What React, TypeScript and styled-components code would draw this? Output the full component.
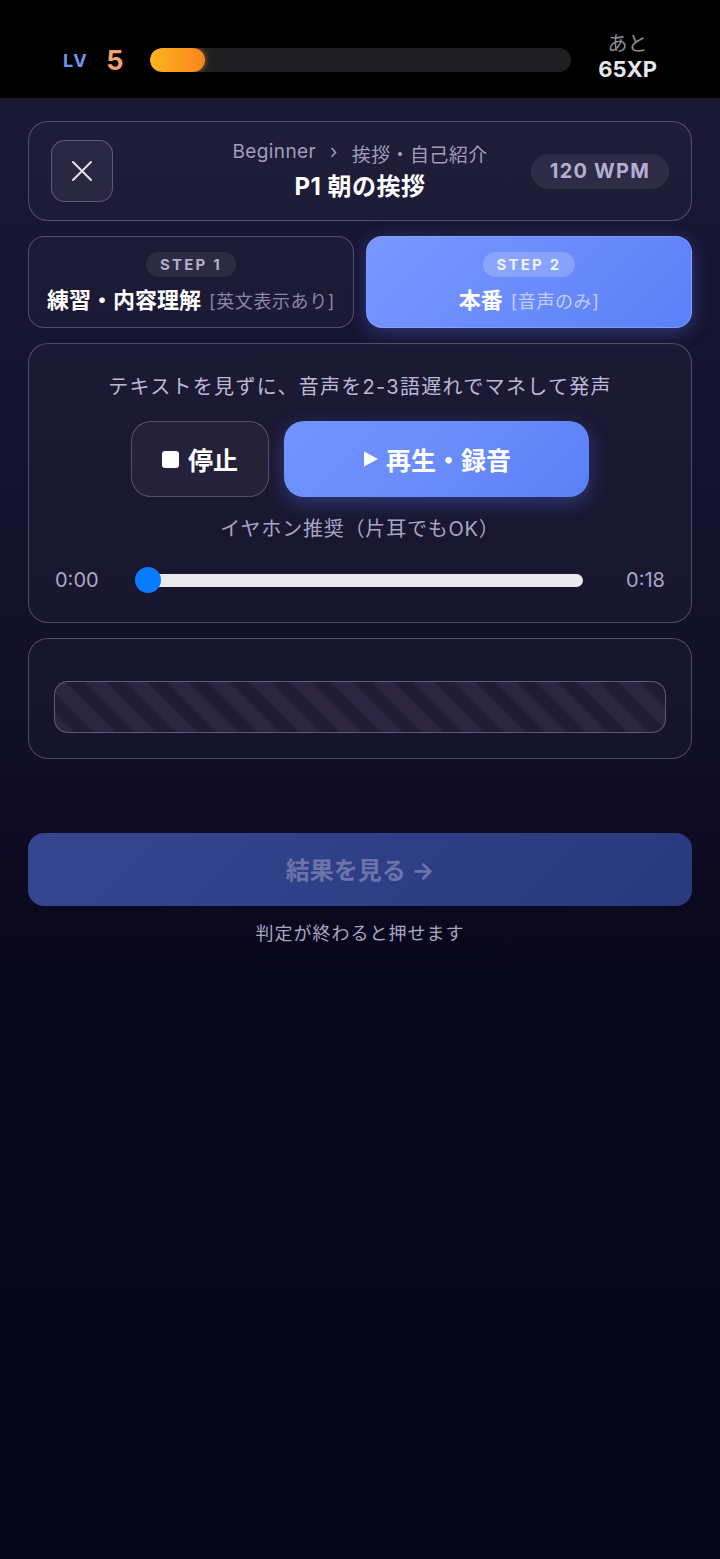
import React from "react";
import styled, { createGlobalStyle } from "styled-components";

const Global = createGlobalStyle`
  html, body { margin: 0; padding: 0; background: #08061a; }
  body { font-family: "Inter", "Noto Sans CJK JP", sans-serif; -webkit-font-smoothing: antialiased; }
  * { box-sizing: border-box; }
`;

const Screen = styled.div`
  width: 720px;
  min-height: 1559px;
  display: flex;
  flex-direction: column;
  background: linear-gradient(180deg, #1c1937 0%, #120f29 45%, #09071b 62%, #07051a 100%);
`;

const TopBar = styled.div`
  height: 98px;
  background: #000;
  display: flex;
  align-items: center;
  padding: 22px 63px 0 63px;
`;

const LvLabel = styled.span`
  font-family: "Inter", sans-serif;
  font-weight: 700;
  font-size: 18px;
  color: #6f95f2;
  letter-spacing: 1.5px;
`;

const LvNum = styled.span`
  font-family: "Inter", sans-serif;
  font-weight: 700;
  font-size: 27px;
  color: #f2a273;
  margin-left: 18px;
  margin-right: 26px;
`;

const XpTrack = styled.div`
  flex: 1;
  height: 24px;
  border-radius: 12px;
  background: #1f1f22;
  overflow: hidden;
`;

const XpFill = styled.div`
  height: 100%;
  border-radius: 12px;
  background: linear-gradient(90deg, #ffb51f 0%, #f7851c 100%);
  box-shadow: 0 0 6px rgba(255, 150, 30, 0.6);
`;

const XpRemain = styled.div`
  display: flex;
  flex-direction: column;
  align-items: center;
  margin-left: 27px;
  line-height: 1.2;
  margin-top: -6px;
`;

const XpSmall = styled.span`
  font-size: 20px;
  color: #8d8d92;
`;

const XpBig = styled.span`
  font-family: "Inter", sans-serif;
  font-weight: 700;
  font-size: 22px;
  color: #e6e6ea;
`;

const Content = styled.div`
  display: flex;
  flex-direction: column;
  padding: 23px 28px 0 28px;
`;

const Card = styled.div`
  border: 1.5px solid rgba(190, 185, 230, 0.32);
  border-radius: 20px;
  background: rgba(255, 255, 255, 0.025);
`;

const HeaderCard = styled(Card)`
  height: 100px;
  display: grid;
  grid-template-columns: 1fr auto 1fr;
  align-items: center;
  padding: 0 22px;
`;

const CloseBtn = styled.button`
  width: 62px;
  height: 62px;
  border-radius: 14px;
  border: 1.5px solid rgba(190, 185, 230, 0.35);
  background: rgba(255, 255, 255, 0.05);
  display: flex;
  align-items: center;
  justify-content: center;
  padding: 0;
`;

const HeaderCenter = styled.div`
  display: flex;
  flex-direction: column;
  align-items: center;
  gap: 0;
`;

const Crumb = styled.div`
  font-size: 19px;
  color: #a19dbd;
  display: flex;
  gap: 14px;
  letter-spacing: 0.4px;
`;

const Title = styled.div`
  font-size: 24px;
  font-weight: 700;
  color: #fff;
  letter-spacing: 0.5px;
`;

const WpmPill = styled.div`
  justify-self: end;
  height: 35px;
  padding: 0 19px;
  border-radius: 18px;
  background: rgba(255, 255, 255, 0.07);
  display: flex;
  align-items: center;
  font-family: "Inter", sans-serif;
  font-weight: 700;
  font-size: 20px;
  letter-spacing: 1.2px;
  color: #b3afd2;
`;

const StepRow = styled.div`
  display: grid;
  grid-template-columns: 1fr 1fr;
  gap: 12px;
  margin-top: 15px;
`;

const StepCard = styled.div<{ $active?: boolean }>`
  height: 92px;
  border-radius: 16px;
  display: flex;
  flex-direction: column;
  align-items: center;
  justify-content: center;
  gap: 5px;
  padding-top: 1px;
  border: 1.5px solid ${(p) => (p.$active ? "rgba(140,170,255,0.6)" : "rgba(190,185,230,0.32)")};
  background: ${(p) =>
    p.$active
      ? "linear-gradient(135deg, #7b97ff 0%, #6a8cfb 50%, #5a80f7 100%)"
      : "rgba(255,255,255,0.025)"};
  box-shadow: ${(p) => (p.$active ? "0 4px 18px rgba(90,120,255,0.35)" : "none")};
`;

const StepPill = styled.div<{ $active?: boolean }>`
  height: 25px;
  padding: 0 14px;
  border-radius: 13px;
  display: flex;
  align-items: center;
  font-family: "Inter", sans-serif;
  font-weight: 700;
  font-size: 15px;
  letter-spacing: 2.2px;
  background: ${(p) => (p.$active ? "rgba(255,255,255,0.2)" : "rgba(255,255,255,0.07)")};
  color: ${(p) => (p.$active ? "#eef1ff" : "#b2aecb")};
`;

const StepLabel = styled.div`
  display: flex;
  align-items: baseline;
  gap: 8px;
  white-space: nowrap;
`;

const StepMain = styled.span`
  font-size: 22px;
  font-weight: 700;
  color: #fff;
`;

const StepSub = styled.span<{ $active?: boolean }>`
  font-size: 18px;
  letter-spacing: 0.6px;
  color: ${(p) => (p.$active ? "rgba(255,255,255,0.62)" : "#8a86a6")};
`;

const PlayerCard = styled(Card)`
  margin-top: 15px;
  height: 280px;
  display: flex;
  flex-direction: column;
  align-items: center;
  padding: 27px 26px 0 26px;
`;

const Hint = styled.div`
  font-size: 20px;
  letter-spacing: 1.3px;
  color: #bdb9d4;
`;

const BtnRow = styled.div`
  display: flex;
  gap: 15px;
  margin-top: 21px;
`;

const StopBtn = styled.button`
  width: 138px;
  height: 76px;
  border-radius: 20px;
  border: 1.5px solid rgba(190, 185, 230, 0.3);
  background: #25213a;
  color: #fff;
  font-family: "Inter", "Noto Sans CJK JP", sans-serif;
  font-size: 25px;
  font-weight: 700;
  display: flex;
  align-items: center;
  justify-content: center;
  gap: 9px;
`;

const StopIcon = styled.span`
  width: 17px;
  height: 17px;
  border-radius: 3px;
  background: #fff;
`;

const PlayBtn = styled.button`
  width: 305px;
  height: 76px;
  border-radius: 20px;
  border: none;
  background: linear-gradient(135deg, #7093ff 0%, #6a8dfb 50%, #5b80f6 100%);
  box-shadow: 0 6px 20px rgba(90, 120, 255, 0.35);
  color: #fff;
  font-family: "Inter", "Noto Sans CJK JP", sans-serif;
  font-size: 25px;
  font-weight: 700;
  display: flex;
  align-items: center;
  justify-content: center;
  gap: 6px;
`;

const SubHint = styled.div`
  font-size: 20px;
  letter-spacing: 0.8px;
  color: #a8a4c2;
  margin-top: 16px;
`;

const SliderRow = styled.div`
  align-self: stretch;
  display: flex;
  align-items: center;
  margin-top: 26px;
`;

const Time = styled.span<{ $right?: boolean }>`
  font-family: "Inter", sans-serif;
  font-size: 20px;
  color: #aba7c7;
  width: 46px;
  text-align: ${(p) => (p.$right ? "right" : "left")};
`;

const Track = styled.div`
  flex: 1;
  height: 13px;
  margin: 0 36px 0 36px;
  border-radius: 7px;
  background: #ebebee;
  position: relative;
  display: flex;
  align-items: center;
`;

const Thumb = styled.div`
  position: absolute;
  left: -2px;
  width: 26px;
  height: 26px;
  border-radius: 50%;
  background: #0a7bff;
`;

const JudgeCard = styled(Card)`
  margin-top: 15px;
  height: 121px;
  padding: 42px 25px 0 25px;
`;

const StripeBar = styled.div`
  height: 52px;
  border-radius: 14px;
  border: 1.5px solid rgba(190, 185, 230, 0.38);
  background: repeating-linear-gradient(
    45deg,
    #2c2642 0px,
    #2c2642 12px,
    #211c36 15px,
    #211c36 26px,
    #2c2642 29px
  );
`;

const ResultBtn = styled.button`
  margin-top: 74px;
  height: 73px;
  border-radius: 16px;
  border: none;
  background: linear-gradient(135deg, #35468f 0%, #2f3f87 50%, #2a397e 100%);
  color: #6d74a8;
  font-family: "Inter", "Noto Sans CJK JP", sans-serif;
  font-size: 24px;
  font-weight: 700;
  display: flex;
  align-items: center;
  justify-content: center;
  gap: 6px;
  padding-bottom: 3px;
`;

const Caption = styled.div`
  margin-top: 13px;
  text-align: center;
  font-size: 18px;
  letter-spacing: 1px;
  color: #a9a6c3;
`;

export default function App() {
  return (
    <>
      <Global />
      <Screen>
        <TopBar>
          <LvLabel>LV</LvLabel>
          <LvNum>5</LvNum>
          <XpTrack>
            <XpFill style={{ width: `${(55 / 419) * 100}%` }} />
          </XpTrack>
          <XpRemain>
            <XpSmall>あと</XpSmall>
            <XpBig>65XP</XpBig>
          </XpRemain>
        </TopBar>
        <Content>
          <HeaderCard>
            <CloseBtn aria-label="close">
              <svg width="24" height="24" viewBox="0 0 24 24" fill="none">
                <path d="M3 3L21 21M21 3L3 21" stroke="#e4e2f0" strokeWidth="2" strokeLinecap="round" />
              </svg>
            </CloseBtn>
            <HeaderCenter>
              <Crumb>
                <span>Beginner</span>
                <span>›</span>
                <span>挨拶・自己紹介</span>
              </Crumb>
              <Title>P1 朝の挨拶</Title>
            </HeaderCenter>
            <WpmPill>120 WPM</WpmPill>
          </HeaderCard>

          <StepRow>
            <StepCard>
              <StepPill>STEP 1</StepPill>
              <StepLabel>
                <StepMain>練習・内容理解</StepMain>
                <StepSub>[英文表示あり]</StepSub>
              </StepLabel>
            </StepCard>
            <StepCard $active>
              <StepPill $active>STEP 2</StepPill>
              <StepLabel>
                <StepMain>本番</StepMain>
                <StepSub $active>[音声のみ]</StepSub>
              </StepLabel>
            </StepCard>
          </StepRow>

          <PlayerCard>
            <Hint>テキストを見ずに、音声を2-3語遅れでマネして発声</Hint>
            <BtnRow>
              <StopBtn>
                <StopIcon />
                停止
              </StopBtn>
              <PlayBtn>
                <svg width="18" height="18" viewBox="0 0 18 18">
                  <path d="M2 1.5L16 9L2 16.5Z" fill="#fff" />
                </svg>
                再生・録音
              </PlayBtn>
            </BtnRow>
            <SubHint>イヤホン推奨（片耳でもOK）</SubHint>
            <SliderRow>
              <Time>0:00</Time>
              <Track>
                <Thumb />
              </Track>
              <Time $right>0:18</Time>
            </SliderRow>
          </PlayerCard>

          <JudgeCard>
            <StripeBar />
          </JudgeCard>

          <ResultBtn>結果を見る →</ResultBtn>
          <Caption>判定が終わると押せます</Caption>
        </Content>
      </Screen>
    </>
  );
}
